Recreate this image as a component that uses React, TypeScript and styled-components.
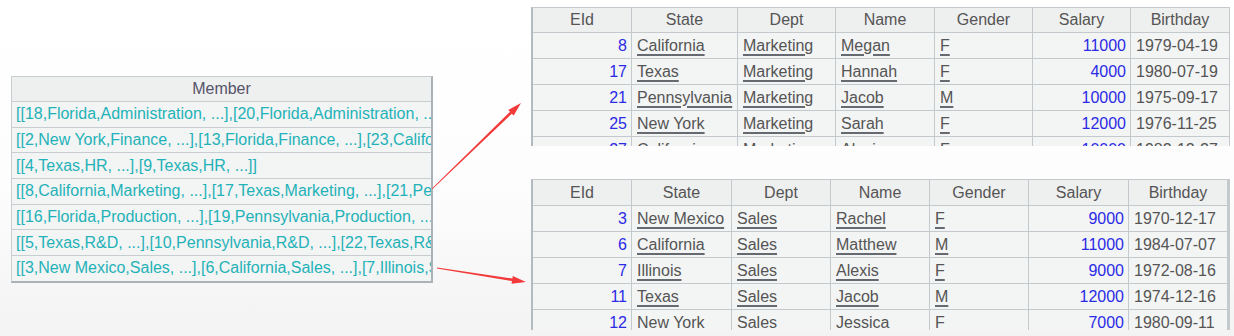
import { createGlobalStyle, styled } from 'styled-components'

type Kind = 'num' | 'link' | 'plain'

interface Column {
  title: string
  kind: Kind
}

const columns: Column[] = [
  { title: 'EId', kind: 'num' },
  { title: 'State', kind: 'link' },
  { title: 'Dept', kind: 'link' },
  { title: 'Name', kind: 'link' },
  { title: 'Gender', kind: 'link' },
  { title: 'Salary', kind: 'num' },
  { title: 'Birthday', kind: 'plain' },
]

const members = [
  '[[18,Florida,Administration, ...],[20,Florida,Administration, ...],[26,Texas,Administration, ...]]',
  '[[2,New York,Finance, ...],[13,Florida,Finance, ...],[23,California,Finance, ...]]',
  '[[4,Texas,HR, ...],[9,Texas,HR, ...]]',
  '[[8,California,Marketing, ...],[17,Texas,Marketing, ...],[21,Pennsylvania,Marketing, ...]]',
  '[[16,Florida,Production, ...],[19,Pennsylvania,Production, ...],[24,Texas,Production, ...]]',
  '[[5,Texas,R&D, ...],[10,Pennsylvania,R&D, ...],[22,Texas,R&D, ...]]',
  '[[3,New Mexico,Sales, ...],[6,California,Sales, ...],[7,Illinois,Sales, ...]]',
]

const marketing = [
  ['8', 'California', 'Marketing', 'Megan', 'F', '11000', '1979-04-19'],
  ['17', 'Texas', 'Marketing', 'Hannah', 'F', '4000', '1980-07-19'],
  ['21', 'Pennsylvania', 'Marketing', 'Jacob', 'M', '10000', '1975-09-17'],
  ['25', 'New York', 'Marketing', 'Sarah', 'F', '12000', '1976-11-25'],
  ['27', 'California', 'Marketing', 'Alexis', 'F', '10000', '1982-12-27'],
]

const sales = [
  ['3', 'New Mexico', 'Sales', 'Rachel', 'F', '9000', '1970-12-17'],
  ['6', 'California', 'Sales', 'Matthew', 'M', '11000', '1984-07-07'],
  ['7', 'Illinois', 'Sales', 'Alexis', 'F', '9000', '1972-08-16'],
  ['11', 'Texas', 'Sales', 'Jacob', 'M', '12000', '1974-12-16'],
  ['12', 'New York', 'Sales', 'Jessica', 'F', '7000', '1980-09-11'],
]

// 箭头：细杆逐渐变粗，末端实心三角
function arrowShape(x1: number, y1: number, x2: number, y2: number) {
  const dx = x2 - x1
  const dy = y2 - y1
  const len = Math.hypot(dx, dy)
  const ux = dx / len
  const uy = dy / len
  const nx = -uy
  const ny = ux
  const headLen = 14
  const headHalf = 4
  const bx = x2 - ux * headLen
  const by = y2 - uy * headLen
  const p = (x: number, y: number) => `${x.toFixed(1)},${y.toFixed(1)}`
  return [
    p(x1 + nx * 0.4, y1 + ny * 0.4),
    p(bx + nx * 1.3, by + ny * 1.3),
    p(bx + nx * headHalf, by + ny * headHalf),
    p(x2, y2),
    p(bx - nx * headHalf, by - ny * headHalf),
    p(bx - nx * 1.3, by - ny * 1.3),
    p(x1 - nx * 0.4, y1 - ny * 0.4),
  ].join(' ')
}

interface DataTableProps {
  widths: number[]
  headerHeight: number
  rowHeight: number
  clipHeight: number
  rows: string[][]
}

function DataTable({ widths, headerHeight, rowHeight, clipHeight, rows }: DataTableProps) {
  return (
    <TableClip $height={clipHeight}>
      <Grid $cols={widths.map((w) => `${w}px`).join(' ')} $header={headerHeight} $row={rowHeight}>
        {columns.map((c) => (
          <HeadCell key={c.title}>{c.title}</HeadCell>
        ))}
        {rows.map((r, i) =>
          r.map((v, j) => (
            <Cell key={`${i}-${j}`} $kind={columns[j].kind}>
              <CellText $kind={columns[j].kind}>{v}</CellText>
            </Cell>
          )),
        )}
      </Grid>
    </TableClip>
  )
}

export default function App() {
  return (
    <>
      <GlobalStyle />
      <Page>
        <MemberTable>
          <MemberHead>Member</MemberHead>
          {members.map((m) => (
            <MemberCell key={m}>{m}</MemberCell>
          ))}
        </MemberTable>
        <RightColumn>
          <DataTable
            widths={[98, 105, 97, 98, 97, 97, 98]}
            headerHeight={24}
            rowHeight={25}
            clipHeight={139}
            rows={marketing}
          />
          <DataTable
            widths={[98, 99, 98, 98, 98, 99, 98]}
            headerHeight={25}
            rowHeight={25}
            clipHeight={151}
            rows={sales}
          />
        </RightColumn>
        <Arrows viewBox="0 0 1234 336">
          <polygon points={arrowShape(432, 189, 521, 103)} fill="#f23a3a" />
          <polygon points={arrowShape(437, 268, 526, 282)} fill="#f23a3a" />
        </Arrows>
      </Page>
    </>
  )
}

// ============ 样式组件 ============

const GlobalStyle = createGlobalStyle`
  html, body {
    margin: 0;
    padding: 0;
  }
  body {
    font-family: 'Liberation Sans', Arial, sans-serif;
    background: #ffffff;
  }
`

const Page = styled.div`
  position: relative;
  width: 1234px;
  height: 336px;
  overflow: hidden;
  display: flex;
  align-items: flex-start;
  background: linear-gradient(180deg, #ffffff 0%, #fdfdfd 55%, #f3f3f3 100%);
`

const MemberTable = styled.div`
  margin: 76px 0 0 11px;
  width: 419px;
  display: grid;
  grid-template-columns: 1fr;
  grid-template-rows: 24px;
  grid-auto-rows: 24.7px;
  gap: 1px;
  background: #c7cdd1;
  border-top: 1px solid #c7cdd1;
  border-left: 1px solid #c7cdd1;
  border-right: 2px solid #aab2b8;
  border-bottom: 2px solid #aab2b8;
`

const MemberHead = styled.div`
  background: #eeefef;
  color: #57536a;
  font-size: 16px;
  display: flex;
  align-items: center;
  justify-content: center;
`

const MemberCell = styled.div`
  background: #f3f4f4;
  color: #1fb2b8;
  font-size: 16px;
  padding: 0 4px;
  white-space: nowrap;
  overflow: hidden;
  display: flex;
  align-items: center;
`

const RightColumn = styled.div`
  margin: 7px 0 0 98px;
  display: flex;
  flex-direction: column;
  gap: 33px;
`

const TableClip = styled.div<{ $height: number }>`
  height: ${(props) => props.$height}px;
  overflow: hidden;
`

const Grid = styled.div<{ $cols: string; $header: number; $row: number }>`
  display: grid;
  grid-template-columns: ${(props) => props.$cols};
  grid-template-rows: ${(props) => props.$header}px;
  grid-auto-rows: ${(props) => props.$row}px;
  gap: 1px;
  background: #c3c9cd;
  border-top: 1px solid #c3c9cd;
  border-left: 2px solid #b4bbc0;
  border-right: 1px solid #c3c9cd;
`

const HeadCell = styled.div`
  background: #eeefef;
  color: #555555;
  font-size: 16px;
  display: flex;
  align-items: center;
  justify-content: center;
`

const Cell = styled.div<{ $kind: Kind }>`
  background: #f3f4f4;
  font-size: 16px;
  padding: 0 4px 0 5px;
  white-space: nowrap;
  overflow: hidden;
  display: flex;
  align-items: center;
  justify-content: ${(props) => (props.$kind === 'num' ? 'flex-end' : 'flex-start')};
`

const CellText = styled.span<{ $kind: Kind }>`
  color: ${(props) => (props.$kind === 'num' ? '#2b2be6' : '#555555')};
  text-decoration: ${(props) => (props.$kind === 'link' ? 'underline' : 'none')};
  text-decoration-thickness: 2px;
  text-underline-offset: 3px;
  text-decoration-color: #666a70;
`

const Arrows = styled.svg`
  position: absolute;
  left: 0;
  top: 0;
  width: 1234px;
  height: 336px;
  pointer-events: none;
`
